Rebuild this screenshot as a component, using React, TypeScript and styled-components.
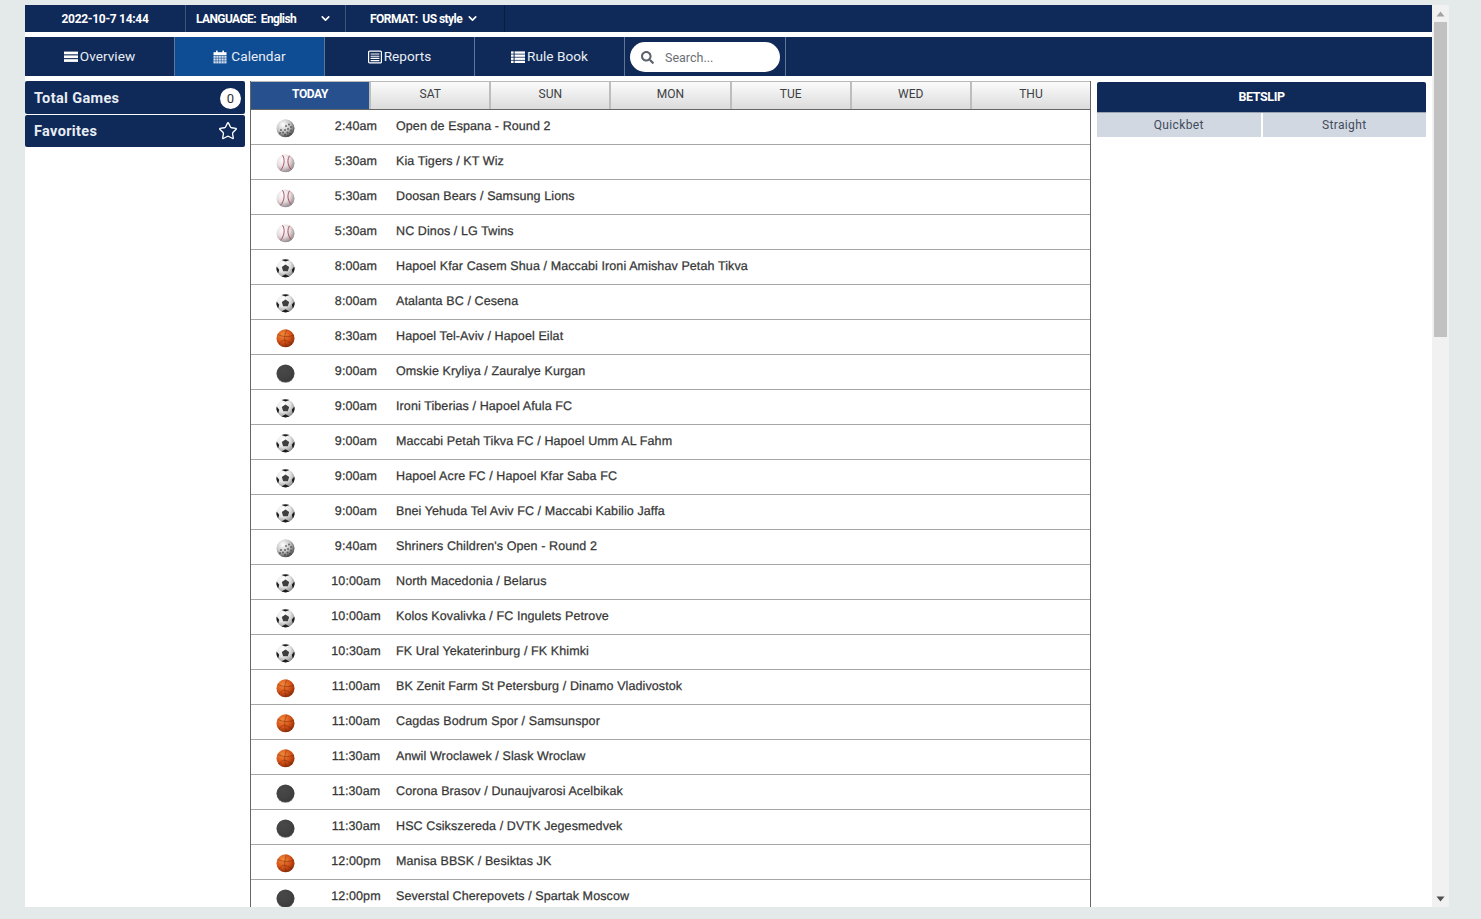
import React, { useId } from "react";
import styled, { createGlobalStyle } from "styled-components";
import { FaSearch } from "react-icons/fa";
import { Star, ChevronDown } from "lucide-react";

const NAVY = "#0f2958";
const UI = `"Roboto", "Liberation Sans", sans-serif`;

const Global = createGlobalStyle`
  html, body { margin: 0; padding: 0; height: 100%; overflow: hidden; background: #e4e9e9; }
  * { box-sizing: border-box; }
`;

const Shell = styled.div`
  margin: 5px 32px 0 25px;
  height: 902px;
  overflow: hidden;
  background: #fff;
  display: flex;
`;
const Page = styled.div`
  width: 1407px;
  height: 902px;
  overflow: hidden;
  flex-shrink: 0;
  display: flex;
  flex-direction: column;
`;
const Rail = styled.div`
  width: 17px;
  background: #f1f1f1;
  display: flex;
  flex-direction: column;
`;
const RailButton = styled.div`
  height: 17px;
  display: flex;
  align-items: center;
  justify-content: center;
`;
const Thumb = styled.div`
  height: 315px;
  margin: 0 2px;
  background: #c1c1c1;
`;
const RailGap = styled.div`
  flex: 1;
`;
const TopBar = styled.div`
  flex: none;
  height: 27px;
  background: ${NAVY};
  display: flex;
  color: #fff;
  font: 700 12px/26px ${UI};
`;
const TopCell = styled.div<{ $w: number; $pad?: number; $center?: boolean; $dim?: boolean; $ls: number }>`
  width: ${(p) => p.$w}px;
  padding-left: ${(p) => p.$pad ?? 0}px;
  letter-spacing: ${(p) => p.$ls}px;
  border-right: 1px solid ${(p) => (p.$dim ? "#0a1d40" : "#3f5579")};
  display: flex;
  align-items: center;
  justify-content: ${(p) => (p.$center ? "center" : "flex-start")};
`;
const Chevron = styled(ChevronDown)<{ $ml: number }>`
  width: 13px;
  height: 13px;
  margin-left: ${(p) => p.$ml}px;
`;
const NavBar = styled.nav`
  flex: none;
  margin-top: 5px;
  height: 39px;
  background: ${NAVY};
  display: flex;
`;
const NavItem = styled.div<{ $active?: boolean; $gap?: number }>`
  width: 150px;
  background: ${(p) => (p.$active ? "#0e4c93" : "transparent")};
  border-right: 1px solid #5f7597;
  color: #e9eef5;
  font: 400 13.6px/39px ${UI};
  letter-spacing: 0.05px;
  display: flex;
  align-items: center;
  justify-content: center;
  gap: ${(p) => p.$gap ?? 2}px;
  svg { width: 14px; height: 14px; flex-shrink: 0; }
`;
const SearchCell = styled.div`
  width: 161px;
  border-right: 1px solid #5f7597;
  padding: 5px 5px 4px;
`;
const SearchBox = styled.div`
  height: 30px;
  border-radius: 15px;
  background: #fff;
  display: flex;
  align-items: center;
  padding-left: 11px;
  color: #6a6f76;
  font: 400 12.5px ${UI};
  gap: 11px;
  svg { width: 13px; height: 13px; color: #5d636b; }
`;
const Main = styled.div`
  display: flex;
  align-items: flex-start;
  padding-top: 5px;
  flex: 1;
  min-height: 0;
  overflow: hidden;
`;
const Side = styled.aside`
  width: 220px;
  display: flex;
  flex-direction: column;
  gap: 1px;
`;
const SideItem = styled.div<{ $h: number }>`
  height: ${(p) => p.$h}px;
  background: ${NAVY};
  color: #e8edf3;
  border-radius: 2px;
  display: flex;
  align-items: center;
  justify-content: space-between;
  padding: 1px 4px 0 9px;
  font: 700 14.5px ${UI};
  letter-spacing: 0.35px;
`;
const Badge = styled.span`
  width: 21px;
  height: 21px;
  border-radius: 50%;
  background: #fff;
  color: #333;
  font: 400 13px/21px ${UI};
  text-align: center;
  letter-spacing: 0;
`;
const FavStar = styled(Star)`
  width: 20px;
  height: 20px;
  margin-right: 3px;
  margin-top: -1px;
  color: #fff;
`;
const Center = styled.section`
  width: 841px;
  margin-left: 5px;
  flex-shrink: 0;
  align-self: stretch;
  border-left: 1px solid #666;
  border-right: 1px solid #666;
`;
const Tabs = styled.div`
  display: flex;
  height: 29px;
  border-top: 1px solid #b9b9b9;
  border-bottom: 1px solid #666;
`;
const Tab = styled.div<{ $active?: boolean }>`
  flex: 1;
  text-align: center;
  font: ${(p) => (p.$active ? 700 : 400)} 12px/24px ${UI};
  letter-spacing: ${(p) => (p.$active ? "-0.4px" : "0")};
  color: ${(p) => (p.$active ? "#fff" : "#3c3f44")};
  background: ${(p) => (p.$active ? "#27508f" : "linear-gradient(#fbfbfb, #dcdcdc)")};
  border-right: 2px solid #bdbdbd;
  &:last-child { border-right: 0; }
`;
const Row = styled.div`
  height: 35px;
  border-bottom: 1px solid #a6a6a6;
  display: grid;
  grid-template-columns: 70px 70px 1fr;
  align-items: center;
  color: #363636;
  font: 400 12.5px/1 "Liberation Sans", sans-serif;
  text-rendering: geometricPrecision;
  letter-spacing: 0.1px;
  -webkit-text-stroke: 0.25px #363636;
`;
const IconCell = styled.div`
  display: flex;
  justify-content: center;
  margin-top: 2px;
  padding-right: 1px;
`;
const RowText = styled.div`
  margin-top: -2px;
  padding-left: 5px;
  white-space: nowrap;
`;
const TimeText = styled.div`
  margin-top: -2px;
  text-align: center;
  white-space: nowrap;
`;
const Slip = styled.aside`
  width: 329px;
  margin-left: 6px;
  margin-top: 1px;
`;
const SlipHead = styled.div`
  height: 30px;
  background: ${NAVY};
  border-radius: 2px 2px 0 0;
  color: #fff;
  font: 700 12.5px/30px ${UI};
  letter-spacing: -0.4px;
  text-align: center;
`;
const SlipTabs = styled.div`
  display: flex;
  gap: 2px;
  height: 25px;
  border-top: 1px solid #9aa3b2;
`;
const SlipTab = styled.div`
  flex: 1;
  background: #d2d8e1;
  color: #414b5d;
  font: 400 12px/24px ${UI};
  letter-spacing: 0.35px;
  text-align: center;
`;

const BarsIcon = () => (
  <svg viewBox="0 0 14 14" fill="#fff" aria-hidden="true">
    <rect x="0" y="1.6" width="14" height="2.7" />
    <rect x="0" y="5.4" width="14" height="2.7" />
    <rect x="0" y="9.2" width="14" height="2.7" />
  </svg>
);
const CalendarIcon = () => (
  <svg viewBox="0 0 14 14" aria-hidden="true">
    <path d="M0.5 2.2 H13.5 V5 H0.5Z" fill="#fff" />
    <rect x="3" y="0.6" width="1.6" height="2.4" fill="#fff" />
    <rect x="9.4" y="0.6" width="1.6" height="2.4" fill="#fff" />
    <path d="M0.5 5.6 H13.5 V13.4 H0.5Z" fill="#d5dfee" />
    <path d="M3 5.6 V13.4 M5.6 5.6 V13.4 M8.3 5.6 V13.4 M11 5.6 V13.4 M0.5 8.2 H13.5 M0.5 10.8 H13.5" stroke="#0e4c93" strokeWidth="0.55" />
  </svg>
);
const ListAltIcon = () => (
  <svg viewBox="0 0 14 14" aria-hidden="true">
    <rect x="0.6" y="1.1" width="12.8" height="11.8" rx="1" fill="none" stroke="#fff" strokeWidth="1.2" />
    <path d="M2.6 4 H11.4 M2.6 6.2 H11.4 M2.6 8.4 H11.4 M2.6 10.6 H11.4" stroke="#fff" strokeWidth="1.1" />
  </svg>
);
const ListIcon = () => (
  <svg viewBox="0 0 14 14" fill="#fff" aria-hidden="true">
    {[1.4, 4.5, 7.6, 10.7].map((y) => (
      <React.Fragment key={y}>
        <rect x="0" y={y} width="2.6" height="2.3" />
        <rect x="3.6" y={y} width="10.4" height="2.3" />
      </React.Fragment>
    ))}
  </svg>
);

type Kind = "golf" | "base" | "soc" | "bask" | "puck";

const Ball = ({ kind }: { kind: Kind }) => {
  const id = useId();
  const fills: Record<Kind, [string, string, string]> = {
    golf: ["#ffffff", "#c4c4c4", "#454545"],
    base: ["#ffffff", "#e6dcde", "#8d858b"],
    soc: ["#ffffff", "#e4e4e4", "#8a8a8a"],
    bask: ["#f28a3c", "#d8551a", "#8a2a08"],
    puck: ["#484848", "#434343", "#3a3a3a"],
  };
  const [a, b, c] = fills[kind];
  return (
    <svg width="19" height="19" viewBox="0 0 19 19" aria-hidden="true">
      <defs>
        <radialGradient id={id} cx="36%" cy="30%" r="74%">
          <stop offset="0%" stopColor={a} />
          <stop offset="55%" stopColor={b} />
          <stop offset="100%" stopColor={c} />
        </radialGradient>
      </defs>
      {kind === "puck" && <ellipse cx="9.5" cy="10" rx="9" ry="8.8" fill="#7a7a7a" />}
      <circle cx="9.5" cy="9.3" r={kind === "puck" ? 8.8 : 9} fill={`url(#${id})`} />
      {kind === "golf" && (
        <g fill="#3f3f3f" opacity="0.7">
          {[[10,7],[13,5.5],[15,8],[12,10],[15,11.5],[9,11],[11.5,13.5],[7,13.5],[14,14.5],[9,15.8],[5,11],[4,14],[12,16.5]].map(([x, y], i) => (
            <circle key={i} cx={x} cy={y} r="1" />
          ))}
        </g>
      )}
      {kind === "base" && (
        <g fill="none" stroke="#a83f50" strokeWidth="1" opacity="0.9">
          <path d="M6.5 1.2 C9.4 5.5 8.2 12 4.6 16.4" />
          <path d="M13.6 1.8 C11.2 5 11.2 10.8 15 15.4" />
        </g>
      )}
      {kind === "soc" && (
        <g fill="#1c1c1c">
          <path d="M9.5 5.4 L13.2 8 L11.8 12.2 H7.2 L5.8 8Z" fill="#3e3e3e" />
          <path d="M5.6 1.1 L9.5 2.6 L13.4 1.1 C11 -0.1 8 -0.1 5.6 1.1Z" />
          <path d="M0.6 7.6 L3.2 10.8 L2.2 14.4 C0.4 12.2 0.1 9.8 0.6 7.6Z" />
          <path d="M18.4 7.6 L15.8 10.8 L16.8 14.4 C18.6 12.2 18.9 9.8 18.4 7.6Z" />
          <path d="M5.6 17.6 L9.5 15.2 L13.4 17.6 C11 18.7 8 18.7 5.6 17.6Z" />
        </g>
      )}
      {kind === "bask" && (
        <g fill="none" stroke="#6f2405" strokeWidth="0.6" opacity="0.75">
          <path d="M1.5 5 C6 8 13 8.5 18 6" />
          <path d="M11 0.6 C8 6 8 12 10.5 18" />
          <path d="M3 15 C6 11 8 9 16 15" />
        </g>
      )}
    </svg>
  );
};

const games: [Kind, string, string][] = [
  ["golf", "2:40am", "Open de Espana - Round 2"],
  ["base", "5:30am", "Kia Tigers / KT Wiz"],
  ["base", "5:30am", "Doosan Bears / Samsung Lions"],
  ["base", "5:30am", "NC Dinos / LG Twins"],
  ["soc", "8:00am", "Hapoel Kfar Casem Shua / Maccabi Ironi Amishav Petah Tikva"],
  ["soc", "8:00am", "Atalanta BC / Cesena"],
  ["bask", "8:30am", "Hapoel Tel-Aviv / Hapoel Eilat"],
  ["puck", "9:00am", "Omskie Kryliya / Zauralye Kurgan"],
  ["soc", "9:00am", "Ironi Tiberias / Hapoel Afula FC"],
  ["soc", "9:00am", "Maccabi Petah Tikva FC / Hapoel Umm AL Fahm"],
  ["soc", "9:00am", "Hapoel Acre FC / Hapoel Kfar Saba FC"],
  ["soc", "9:00am", "Bnei Yehuda Tel Aviv FC / Maccabi Kabilio Jaffa"],
  ["golf", "9:40am", "Shriners Children's Open - Round 2"],
  ["soc", "10:00am", "North Macedonia / Belarus"],
  ["soc", "10:00am", "Kolos Kovalivka / FC Ingulets Petrove"],
  ["soc", "10:30am", "FK Ural Yekaterinburg / FK Khimki"],
  ["bask", "11:00am", "BK Zenit Farm St Petersburg / Dinamo Vladivostok"],
  ["bask", "11:00am", "Cagdas Bodrum Spor / Samsunspor"],
  ["bask", "11:30am", "Anwil Wroclawek / Slask Wroclaw"],
  ["puck", "11:30am", "Corona Brasov / Dunaujvarosi Acelbikak"],
  ["puck", "11:30am", "HSC Csikszereda / DVTK Jegesmedvek"],
  ["bask", "12:00pm", "Manisa BBSK / Besiktas JK"],
  ["puck", "12:00pm", "Severstal Cherepovets / Spartak Moscow"],
];

const days = ["TODAY", "SAT", "SUN", "MON", "TUE", "WED", "THU"];

export default function App() {
  return (
    <>
      <Global />
      <Shell>
        <Page>
          <TopBar>
            <TopCell $w={161} $center $ls={-0.3}>2022-10-7 14:44</TopCell>
            <TopCell $w={160} $pad={10} $ls={-0.6}>LANGUAGE:&nbsp; English<Chevron $ml={23} strokeWidth={3} /></TopCell>
            <TopCell $w={159} $pad={24} $dim $ls={-0.55}>FORMAT:&nbsp; US style<Chevron $ml={4} strokeWidth={3} /></TopCell>
          </TopBar>
          <NavBar>
            <NavItem><BarsIcon />Overview</NavItem>
            <NavItem $active $gap={4}><CalendarIcon />Calendar</NavItem>
            <NavItem><ListAltIcon />Reports</NavItem>
            <NavItem><ListIcon />Rule Book</NavItem>
            <SearchCell>
              <SearchBox><FaSearch />Search...</SearchBox>
            </SearchCell>
          </NavBar>
          <Main>
            <Side>
              <SideItem $h={33}>Total Games<Badge>0</Badge></SideItem>
              <SideItem $h={32}>Favorites<FavStar strokeWidth={1.6} /></SideItem>
            </Side>
            <Center>
              <Tabs>
                {days.map((d, i) => (
                  <Tab key={d} $active={i === 0}>{d}</Tab>
                ))}
              </Tabs>
              {games.map(([k, t, n], i) => (
                <Row key={i}>
                  <IconCell><Ball kind={k} /></IconCell>
                  <TimeText>{t}</TimeText>
                  <RowText>{n}</RowText>
                </Row>
              ))}
            </Center>
            <Slip>
              <SlipHead>BETSLIP</SlipHead>
              <SlipTabs>
                <SlipTab>Quickbet</SlipTab>
                <SlipTab>Straight</SlipTab>
              </SlipTabs>
            </Slip>
          </Main>
        </Page>
        <Rail>
          <RailButton>
            <svg width="9" height="6" viewBox="0 0 9 6" aria-hidden="true"><path d="M0.5 5.5 L4.5 0.5 L8.5 5.5Z" fill="#a3a3a3" /></svg>
          </RailButton>
          <Thumb />
          <RailGap />
          <RailButton>
            <svg width="9" height="6" viewBox="0 0 9 6" aria-hidden="true"><path d="M0.5 0.5 L4.5 5.5 L8.5 0.5Z" fill="#505050" /></svg>
          </RailButton>
        </Rail>
      </Shell>
    </>
  );
}
